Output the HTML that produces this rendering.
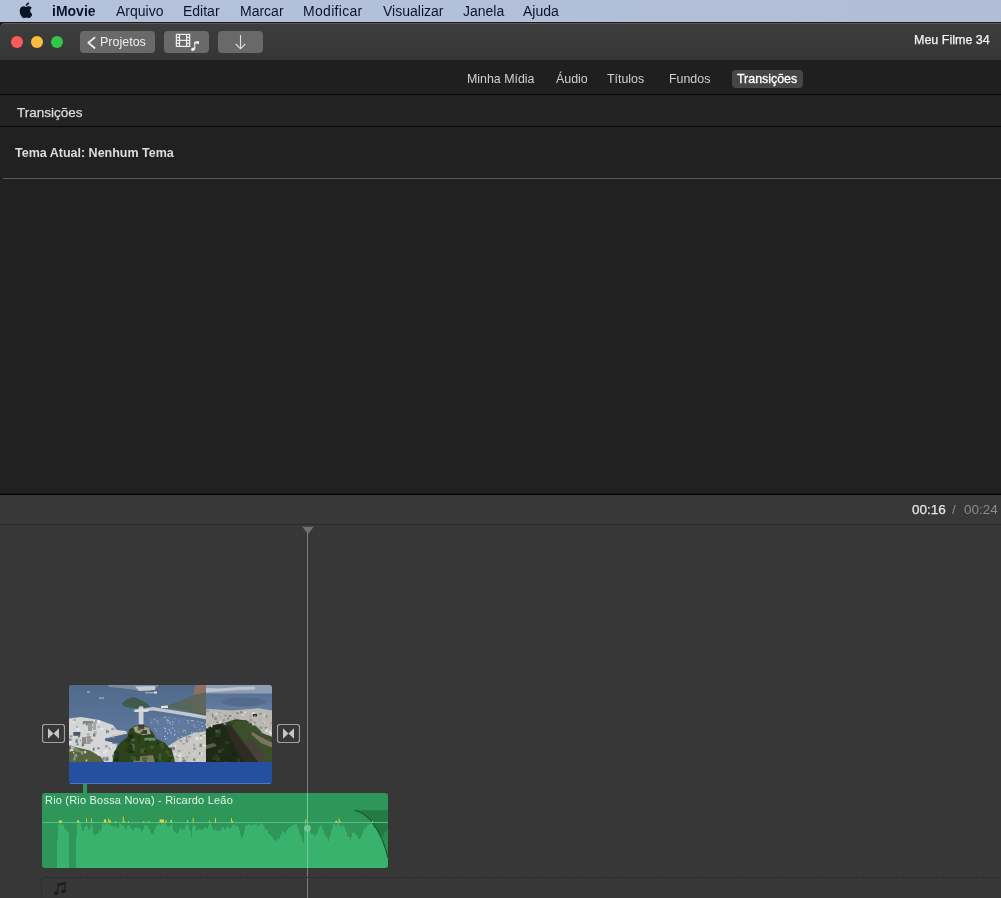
<!DOCTYPE html>
<html>
<head>
<meta charset="utf-8">
<style>
*{box-sizing:border-box;margin:0;padding:0}
html,body{width:1001px;height:898px;overflow:hidden;background:#373737;font-family:"Liberation Sans",sans-serif;}
body{position:relative}
.abs{position:absolute}
.t{position:absolute;white-space:nowrap;line-height:1;transform-origin:0 0;will-change:transform}
#menubar{left:0;top:0;width:1001px;height:22px;background:linear-gradient(90deg,#b5c2dc,#b0bdd5)}
#menuline{left:0;top:22px;width:1001px;height:1px;background:#1a1a1c}
#titlebar{left:0;top:23px;width:1001px;height:37px;background:linear-gradient(#3d3d3d,#363636);border-top:1px solid #5c5c5c;border-top-left-radius:5px}
#tbback{left:0;top:22px;width:20px;height:10px;background:#1a1a1c}
#tbbot{left:0;top:60px;width:1001px;height:1px;background:#0b0b0b}
#tabbar{left:0;top:60px;width:1001px;height:34px;background:#1f1f1f}
#tabline{left:0;top:94px;width:1001px;height:1px;background:#070707}
#hdr{left:0;top:95px;width:1001px;height:31px;background:#232323}
#hdrline{left:0;top:126px;width:1001px;height:1px;background:#070707}
#content{left:0;top:127px;width:1001px;height:367px;background:#212121}
#sep{left:3px;top:178px;width:998px;height:1px;background:#595959}
#contentline{left:0;top:493px;width:1001px;height:2px;background:linear-gradient(#1a1a1a 50%,#000 50%)}
#tltool{left:0;top:495px;width:1001px;height:29px;background:#383838}
#tlline{left:0;top:524px;width:1001px;height:1px;background:#2b2b2b}
#tl{left:0;top:525px;width:1001px;height:373px;background:#373737}
.menu{color:#0a1428;font-size:14px;top:4px}
.btn{position:absolute;top:31px;height:22px;background:#696969;border-radius:4px}
.tab{color:#d0d0d0;font-size:12.400px;top:73px}
.light{position:absolute;top:36px;width:12px;height:12px;border-radius:50%}
</style>
</head>
<body>
<div class="abs" id="menubar"></div>
<div class="abs" id="menuline"></div>
<div class="abs" id="tbback"></div>
<div class="abs" id="titlebar"></div>
<div class="abs" id="tbbot"></div>
<div class="abs" id="tabbar"></div>
<div class="abs" id="tabline"></div>
<div class="abs" id="hdr"></div>
<div class="abs" id="hdrline"></div>
<div class="abs" id="content"></div>
<div class="abs" id="sep"></div>
<div class="abs" id="contentline"></div>
<div class="abs" id="tltool"></div>
<div class="abs" id="tlline"></div>
<div class="abs" id="tl"></div>

<!-- menu bar -->
<svg class="abs" id="apple" style="left:18.500px;top:1.500px" width="13.500" height="16.400" viewBox="0 0 14 17"><path fill="#0a1428" d="M11.6 9c0-2 1.6-2.900 1.700-3-0.900-1.400-2.400-1.600-2.900-1.600-1.200-0.100-2.400 0.700-3 0.700-0.600 0-1.600-0.700-2.600-0.700C3.400 4.400 2.100 5.200 1.400 6.400 0 8.900 1 12.600 2.400 14.600c0.700 1 1.500 2.100 2.600 2.100 1 0 1.400-0.700 2.700-0.700 1.200 0 1.600 0.700 2.700 0.700 1.100 0 1.800-1 2.500-2 0.800-1.100 1.100-2.200 1.100-2.300C13.900 12.300 11.600 11.500 11.600 9zM9.500 2.900c0.600-0.700 0.900-1.600 0.800-2.600C9.500 0.400 8.500 0.900 7.900 1.600 7.400 2.200 6.900 3.200 7.100 4.100 8 4.200 8.900 3.700 9.500 2.900z"/></svg>
<div class="t menu" id="m0" style="left:52px;font-weight:bold">iMovie</div>
<div class="t menu" id="m1" style="left:116px">Arquivo</div>
<div class="t menu" id="m2" style="left:183px">Editar</div>
<div class="t menu" id="m3" style="left:240px">Marcar</div>
<div class="t menu" id="m4" style="left:303px;letter-spacing:0.3px">Modificar</div>
<div class="t menu" id="m5" style="left:383px">Visualizar</div>
<div class="t menu" id="m6" style="left:463px">Janela</div>
<div class="t menu" id="m7" style="left:523px">Ajuda</div>

<!-- title bar -->
<div class="light" style="left:11px;background:#fc5b57"></div>
<div class="light" style="left:31px;background:#fdbc40"></div>
<div class="light" style="left:51px;background:#33c748"></div>
<div class="btn" style="left:80px;width:75px"></div>
<div class="btn" style="left:164px;width:45px"></div>
<div class="btn" style="left:218px;width:45px"></div>
<svg class="abs" style="left:86px;top:36px" width="11" height="14" viewBox="0 0 11 14"><path d="M8.600 1.600 L2.400 6.800 L8.600 12" fill="none" stroke="#ececec" stroke-width="1.800" stroke-linecap="round" stroke-linejoin="round"/></svg>
<svg class="abs" style="left:175px;top:33px" width="26" height="19" viewBox="0 0 26 19"><g fill="none" stroke="#ededed" stroke-width="1.250"><rect x="1.400" y="1.400" width="13.300" height="12"/><path d="M4.500 1.400 V13.400 M11.600 1.400 V13.400 M4.500 7.400 H11.600 M1.400 4.400 H4.500 M1.400 7.400 H4.500 M1.400 10.400 H4.500 M11.600 4.400 H14.700 M11.600 7.400 H14.700 M11.600 10.400 H14.700"/></g><g fill="#f2f2f2"><ellipse cx="18" cy="16.200" rx="2" ry="1.600" transform="rotate(-20 18 16.200)"/><path d="M19.200 16.200 V8.700 L24 8 V11.600 C23 10.400 21.500 10.300 20.300 10.800 V16.200 Z"/></g></svg>
<svg class="abs" style="left:234px;top:34px" width="13" height="16" viewBox="0 0 13 16"><path d="M6.500 1 V14.600 M1.800 10 L6.500 14.800 L11.200 10" fill="none" stroke="#e2e2e2" stroke-width="1.100"/></svg>
<div class="t" id="proj" style="left:100px;top:36px;font-size:12.500px;color:#f0f0f0">Projetos</div>
<div class="t" id="title" style="left:914px;top:33.500px;font-size:12.500px;color:#f2f2f2;-webkit-text-stroke:0.25px #f2f2f2">Meu Filme 34</div>

<!-- tabs -->
<div class="abs" style="left:732px;top:70px;width:71px;height:18px;background:#464646;border-radius:4px"></div>
<div class="t tab" id="t0" style="left:467px">Minha Mídia</div>
<div class="t tab" id="t1" style="left:556px">Áudio</div>
<div class="t tab" id="t2" style="left:607px">Títulos</div>
<div class="t tab" id="t3" style="left:669px">Fundos</div>
<div class="t tab" id="t4" style="left:737px;color:#fff;-webkit-text-stroke:0.3px #fff">Transições</div>

<div class="t" id="h1" style="left:17px;top:106px;font-size:13.500px;color:#dcdcdc;-webkit-text-stroke:0.25px #dcdcdc">Transições</div>
<div class="t" id="h2" style="left:15px;top:146.500px;font-size:12.500px;font-weight:bold;color:#dcdcdc">Tema Atual: Nenhum Tema</div>

<div class="t" id="tc1" style="left:912px;top:502.500px;font-size:13.500px;color:#e6e6e6;-webkit-text-stroke:0.25px #e6e6e6">00:16</div>
<div class="t" id="tc2" style="left:952px;top:502.500px;font-size:13.500px;color:#8a8a8a">/</div>
<div class="t" id="tc3" style="left:963.500px;top:502.500px;font-size:13.500px;color:#8a8a8a">00:24</div>

<!-- timeline -->
<div class="abs" style="left:307px;top:533px;width:1px;height:365px;background:#7c7c7c"></div>
<svg class="abs" style="left:301.500px;top:526px" width="12" height="9" viewBox="0 0 12 9"><path d="M0.3 0.8 L11.700 0.8 L6 8.200 Z" fill="#6f6f6f"/></svg>

<!-- transition icons -->
<svg class="abs" style="left:42px;top:724px" width="23" height="19" viewBox="0 0 23 19"><rect x="0.5" y="0.5" width="22" height="18" rx="2.400" fill="none" stroke="#a2a2a2" stroke-width="1.200"/><path d="M6 4.300 L11.500 9.500 L6 14.700 Z M17 4.300 L11.500 9.500 L17 14.700 Z" fill="#c6c6c6"/></svg>
<svg class="abs" style="left:277px;top:724px" width="23" height="19" viewBox="0 0 23 19"><rect x="0.5" y="0.5" width="22" height="18" rx="2.400" fill="none" stroke="#a2a2a2" stroke-width="1.200"/><path d="M6 4.300 L11.500 9.500 L6 14.700 Z M17 4.300 L11.500 9.500 L17 14.700 Z" fill="#c6c6c6"/></svg>

<!-- video clip -->
<div class="abs" id="clip" style="left:69px;top:685px;width:203px;height:99px;border-radius:3px;overflow:hidden;background:#254f9f">
<svg class="abs" style="left:0;top:0" width="203" height="77" viewBox="0 0 203 77">
<defs><filter id="bl" x="-5%" y="-5%" width="110%" height="110%"><feGaussianBlur stdDeviation="0.85"/></filter>
<linearGradient id="sea" x1="0" y1="0" x2="0" y2="1"><stop offset="0" stop-color="#50698b"/><stop offset="0.7" stop-color="#5d799d"/></linearGradient>
<linearGradient id="sea2" x1="0" y1="0" x2="0" y2="1"><stop offset="0.1" stop-color="#566f92"/><stop offset="0.32" stop-color="#627da2"/></linearGradient>
<clipPath id="cL"><rect x="0" y="0" width="137" height="77"/></clipPath>
<clipPath id="cR"><rect x="137" y="0" width="66" height="77"/></clipPath>
</defs>
<g clip-path="url(#cL)"><g>
<rect x="-3" y="-3" width="143" height="83" fill="url(#sea)"/><polygon points="38.0,-1.0 90.0,-1.0 88.0,3.0 80.0,6.0 66.0,5.0 52.0,3.0 40.0,2.0" fill="#7c8ba2" /><polygon points="66.0,1.5 86.0,1.0 86.0,5.0 70.0,6.0" fill="#c5cad2" /><rect x="18" y="6.500" width="3" height="1.200" fill="#a9b6c8"/><rect x="30" y="12.500" width="5" height="1.200" fill="#a9b6c8"/><rect x="76" y="7" width="12" height="1.500" fill="#93a2b8"/><rect x="85" y="6.500" width="3" height="2" fill="#d8dde4"/><polygon points="53.0,18.5 57.0,14.5 64.5,12.0 70.0,14.0 78.0,18.5 81.0,21.5 74.0,23.0 62.0,23.0 55.0,21.5" fill="#3f5b4c" /><polygon points="124.0,10.0 126.0,2.0 128.0,-1.0 138.0,-1.0 138.0,8.0" fill="#8d7064" /><polygon points="90.0,22.7 100.0,20.0 111.0,16.0 124.0,10.5 138.0,7.0 138.0,32.0 121.0,27.2 105.0,23.5" fill="#55675a" /><polygon points="118.0,14.0 138.0,8.0 138.0,30.0 128.0,28.0 122.0,20.0" fill="#5d6658" /><polygon points="64.0,25.8 76.0,23.5 84.0,22.0 96.0,24.0 118.4,27.5 138.0,31.0 138.0,34.5 118.4,31.0 96.0,27.2 84.0,25.5 66.0,27.0" fill="#c3c8cf" /><polygon points="92.0,21.0 99.0,20.5 99.0,23.0 92.0,23.0" fill="#e2e4e6" /><polygon points="80.0,33.0 100.0,31.0 120.0,34.0 138.0,38.0 138.0,58.0 120.0,58.0 100.0,60.0 90.0,52.0 82.0,44.0" fill="#607a9f" /><polygon points="-1.0,33.5 12.0,32.0 30.0,35.0 44.0,40.0 48.0,45.0 57.0,46.0 58.0,49.0 44.0,52.0 36.0,53.5 36.0,55.5 48.0,58.0 46.0,77.0 -1.0,77.0" fill="#d4d5d6" /><polygon points="36.0,53.5 46.0,51.0 58.0,48.5 60.0,52.0 52.0,57.5 47.0,58.5 36.0,55.5" fill="#4d668a" /><polygon points="36.0,52.2 58.0,47.2 58.0,48.5 36.0,53.5" fill="#d9c9b4" /><polygon points="-1.0,60.0 6.0,62.0 21.0,65.4 31.5,71.4 36.0,78.0 -1.0,78.0" fill="#53643f" /><polygon points="-1.0,60.0 8.0,63.0 14.0,68.0 4.0,66.0" fill="#7a8a68" /><polygon points="99.0,61.0 111.0,53.4 126.0,47.5 138.0,46.0 138.0,78.0 106.4,78.0 102.0,67.0" fill="#c9c7c4" /><polygon points="72.0,40.0 78.0,41.5 84.0,47.5 87.0,53.4 96.0,58.0 103.4,67.0 106.4,78.0 43.4,78.0 45.0,67.0 51.0,58.0 58.4,52.0 60.0,44.5 66.0,40.7" fill="#2d431c" /><polygon points="64.4,42.0 72.0,40.5 80.0,43.0 82.0,49.0 74.0,50.0 66.0,47.0" fill="#a89f88" /><polygon points="75.0,53.0 86.0,52.5 87.0,55.5 76.0,56.0" fill="#5d8a6a" /><polygon points="63.0,54.0 65.5,54.0 65.5,66.0 63.0,66.0" fill="#5c6650" /><polygon points="66.0,72.0 84.0,70.0 86.0,78.0 64.0,78.0" fill="#7c7a60" />
</g><g opacity="0.8"><rect x="98.8" y="35.4" width="1.1" height="0.7" fill="#e8edf3"/><rect x="132.8" y="37.2" width="0.7" height="0.9" fill="#cfd8e6"/><rect x="85.3" y="43.3" width="1.2" height="0.7" fill="#cfd8e6"/><rect x="116.6" y="47.9" width="0.6" height="1.0" fill="#cfd8e6"/><rect x="129.8" y="39.4" width="0.7" height="0.7" fill="#b4c2d6"/><rect x="112.5" y="50.8" width="0.7" height="1.0" fill="#cfd8e6"/><rect x="101.6" y="46.9" width="0.6" height="0.6" fill="#cfd8e6"/><rect x="108.8" y="46.4" width="1.1" height="0.9" fill="#b4c2d6"/><rect x="101.0" y="38.2" width="0.7" height="1.1" fill="#cfd8e6"/><rect x="113.3" y="46.2" width="1.2" height="1.1" fill="#b4c2d6"/><rect x="109.7" y="35.8" width="0.8" height="1.3" fill="#b4c2d6"/><rect x="124.3" y="47.6" width="1.2" height="0.8" fill="#e8edf3"/><rect x="100.3" y="45.4" width="1.2" height="0.6" fill="#cfd8e6"/><rect x="134.8" y="44.7" width="1.1" height="0.6" fill="#e8edf3"/><rect x="98.0" y="47.8" width="1.1" height="0.9" fill="#e8edf3"/><rect x="102.4" y="50.4" width="0.6" height="0.9" fill="#cfd8e6"/><rect x="115.4" y="45.3" width="0.8" height="0.8" fill="#e8edf3"/><rect x="94.4" y="42.3" width="1.2" height="0.7" fill="#b4c2d6"/><rect x="103.3" y="39.1" width="0.7" height="0.9" fill="#e8edf3"/><rect x="96.1" y="43.0" width="0.9" height="1.2" fill="#cfd8e6"/><rect x="88.8" y="36.1" width="0.8" height="0.8" fill="#b4c2d6"/><rect x="128.2" y="36.3" width="0.8" height="0.7" fill="#e8edf3"/><rect x="101.4" y="47.4" width="1.3" height="1.1" fill="#e8edf3"/><rect x="135.1" y="50.0" width="1.1" height="0.9" fill="#e8edf3"/><rect x="126.3" y="42.4" width="0.9" height="0.7" fill="#e8edf3"/><rect x="103.2" y="36.5" width="1.3" height="0.9" fill="#cfd8e6"/><rect x="99.7" y="32.5" width="0.6" height="0.7" fill="#cfd8e6"/><rect x="135.0" y="48.8" width="0.6" height="0.7" fill="#b4c2d6"/><rect x="88.6" y="38.3" width="0.8" height="0.9" fill="#cfd8e6"/><rect x="86.7" y="45.2" width="1.3" height="0.9" fill="#b4c2d6"/><rect x="85.0" y="34.0" width="0.8" height="0.8" fill="#e8edf3"/><rect x="135.2" y="46.3" width="0.7" height="1.0" fill="#cfd8e6"/><rect x="124.0" y="39.6" width="1.1" height="0.7" fill="#b4c2d6"/><rect x="110.1" y="57.3" width="0.8" height="0.8" fill="#e8edf3"/><rect x="125.2" y="40.6" width="0.8" height="1.2" fill="#cfd8e6"/><rect x="126.8" y="54.7" width="1.1" height="0.8" fill="#e8edf3"/><rect x="108.6" y="52.2" width="1.3" height="1.2" fill="#b4c2d6"/><rect x="95.0" y="51.1" width="1.3" height="0.9" fill="#e8edf3"/><rect x="101.1" y="37.4" width="0.8" height="0.7" fill="#cfd8e6"/><rect x="132.7" y="41.0" width="1.1" height="1.2" fill="#cfd8e6"/><rect x="132.8" y="53.7" width="1.1" height="0.9" fill="#cfd8e6"/><rect x="105.2" y="49.4" width="0.7" height="1.3" fill="#e8edf3"/><rect x="103.0" y="42.6" width="1.3" height="1.1" fill="#cfd8e6"/><rect x="114.3" y="44.5" width="1.1" height="1.0" fill="#e8edf3"/><rect x="136.9" y="50.1" width="0.8" height="1.0" fill="#cfd8e6"/><rect x="123.5" y="35.0" width="1.3" height="0.7" fill="#cfd8e6"/><rect x="81.6" y="37.2" width="1.0" height="1.1" fill="#b4c2d6"/><rect x="95.0" y="43.2" width="0.7" height="1.2" fill="#b4c2d6"/><rect x="132.1" y="50.2" width="1.2" height="1.0" fill="#e8edf3"/><rect x="87.6" y="35.4" width="1.0" height="1.2" fill="#cfd8e6"/><rect x="115.3" y="53.5" width="0.7" height="0.7" fill="#e8edf3"/><rect x="122.1" y="47.1" width="0.8" height="1.0" fill="#e8edf3"/><rect x="108.0" y="53.5" width="1.2" height="0.6" fill="#cfd8e6"/><rect x="96.1" y="53.4" width="1.0" height="1.0" fill="#cfd8e6"/><rect x="105.7" y="48.8" width="1.0" height="1.0" fill="#e8edf3"/><rect x="96.1" y="45.7" width="1.2" height="1.0" fill="#cfd8e6"/><rect x="120.6" y="56.4" width="1.3" height="0.8" fill="#e8edf3"/><rect x="131.8" y="36.9" width="0.9" height="0.9" fill="#b4c2d6"/><rect x="105.6" y="33.1" width="0.8" height="0.7" fill="#e8edf3"/><rect x="97.6" y="34.5" width="1.1" height="1.3" fill="#e8edf3"/><rect x="118.3" y="35.1" width="1.2" height="1.3" fill="#cfd8e6"/><rect x="118.7" y="37.5" width="1.1" height="1.3" fill="#b4c2d6"/><rect x="99.7" y="36.7" width="0.8" height="1.1" fill="#cfd8e6"/><rect x="99.6" y="44.3" width="1.1" height="0.9" fill="#e8edf3"/><rect x="116.2" y="45.9" width="0.6" height="1.3" fill="#cfd8e6"/><rect x="95.4" y="32.1" width="1.1" height="0.8" fill="#cfd8e6"/><rect x="127.5" y="55.6" width="1.1" height="1.3" fill="#b4c2d6"/><rect x="113.1" y="51.3" width="0.7" height="0.6" fill="#e8edf3"/><rect x="95.6" y="31.5" width="0.7" height="0.8" fill="#e8edf3"/><rect x="130.0" y="44.2" width="0.8" height="1.0" fill="#b4c2d6"/><rect x="136.2" y="38.6" width="0.7" height="1.3" fill="#e8edf3"/><rect x="97.7" y="53.0" width="0.8" height="1.0" fill="#cfd8e6"/><rect x="95.7" y="54.3" width="1.3" height="0.6" fill="#cfd8e6"/><rect x="122.5" y="47.0" width="0.7" height="0.9" fill="#b4c2d6"/><rect x="105.1" y="45.4" width="1.2" height="0.9" fill="#e8edf3"/><rect x="97.9" y="37.2" width="0.8" height="0.7" fill="#e8edf3"/><rect x="122.3" y="35.1" width="1.3" height="1.3" fill="#cfd8e6"/><rect x="131.0" y="43.5" width="0.6" height="1.1" fill="#b4c2d6"/><rect x="130.5" y="50.4" width="0.8" height="0.8" fill="#b4c2d6"/><rect x="82.6" y="36.4" width="0.8" height="0.6" fill="#b4c2d6"/><rect x="31.3" y="43.0" width="3.4" height="1.9" fill="#e8e8e8"/><rect x="9.8" y="47.1" width="1.4" height="1.8" fill="#5b6068"/><rect x="10.9" y="54.7" width="1.2" height="1.8" fill="#8b8f96"/><rect x="7.5" y="58.4" width="2.1" height="1.9" fill="#5b6068"/><rect x="12.7" y="58.4" width="2.4" height="2.9" fill="#5b6068"/><rect x="34.2" y="66.4" width="2.9" height="2.3" fill="#e8e8e8"/><rect x="41.7" y="60.9" width="1.3" height="3.1" fill="#f0f0f0"/><rect x="36.0" y="65.0" width="3.1" height="1.5" fill="#f0f0f0"/><rect x="43.4" y="57.6" width="3.1" height="1.2" fill="#5b6068"/><rect x="33.5" y="72.2" width="2.8" height="2.8" fill="#6f747c"/><rect x="4.0" y="33.9" width="2.7" height="3.4" fill="#a4a6a8"/><rect x="36.0" y="60.2" width="2.8" height="2.3" fill="#8b8f96"/><rect x="26.0" y="35.2" width="3.3" height="3.3" fill="#8b8f96"/><rect x="42.5" y="43.3" width="1.4" height="1.8" fill="#5b6068"/><rect x="43.6" y="42.4" width="2.7" height="2.3" fill="#a4a6a8"/><rect x="3.5" y="73.0" width="1.9" height="1.3" fill="#5b6068"/><rect x="7.7" y="43.4" width="2.9" height="1.9" fill="#f0f0f0"/><rect x="6.9" y="53.7" width="2.3" height="3.4" fill="#8b8f96"/><rect x="39.8" y="62.4" width="1.9" height="2.4" fill="#a4a6a8"/><rect x="26.5" y="66.5" width="3.5" height="2.5" fill="#e8e8e8"/><rect x="0.0" y="52.7" width="3.1" height="3.4" fill="#a4a6a8"/><rect x="3.4" y="36.1" width="2.9" height="1.8" fill="#e8e8e8"/><rect x="6.8" y="68.9" width="2.4" height="3.2" fill="#5b6068"/><rect x="20.5" y="54.4" width="3.2" height="2.1" fill="#6f747c"/><rect x="-0.8" y="54.1" width="2.2" height="1.9" fill="#6f747c"/><rect x="23.6" y="48.9" width="1.5" height="2.0" fill="#e8e8e8"/><rect x="43.3" y="69.8" width="1.5" height="3.3" fill="#5b6068"/><rect x="-0.3" y="65.3" width="1.8" height="1.3" fill="#a4a6a8"/><rect x="20.3" y="51.3" width="1.8" height="1.3" fill="#8b8f96"/><rect x="2.0" y="61.8" width="2.7" height="1.5" fill="#e8e8e8"/><rect x="24.7" y="46.2" width="3.0" height="3.0" fill="#a4a6a8"/><rect x="36.2" y="73.1" width="3.4" height="2.5" fill="#5b6068"/><rect x="3.8" y="74.0" width="2.1" height="2.6" fill="#6f747c"/><rect x="37.0" y="44.9" width="1.3" height="3.3" fill="#6f747c"/><rect x="9.1" y="50.7" width="1.8" height="1.8" fill="#5b6068"/><rect x="37.7" y="45.5" width="2.5" height="2.1" fill="#6f747c"/><rect x="28.5" y="68.5" width="2.5" height="2.2" fill="#e8e8e8"/><rect x="7.2" y="40.7" width="1.4" height="2.0" fill="#8b8f96"/><rect x="17.8" y="48.6" width="3.1" height="1.7" fill="#8b8f96"/><rect x="43.2" y="50.6" width="2.2" height="2.4" fill="#a4a6a8"/><rect x="14.9" y="65.8" width="2.3" height="2.5" fill="#e8e8e8"/><rect x="6.4" y="54.7" width="2.6" height="3.2" fill="#6f747c"/><rect x="4.5" y="72.4" width="2.1" height="2.7" fill="#a4a6a8"/><rect x="0.9" y="63.9" width="3.3" height="2.3" fill="#f0f0f0"/><rect x="27.9" y="35.3" width="3.3" height="3.3" fill="#f0f0f0"/><rect x="13.7" y="36.9" width="1.6" height="2.4" fill="#5b6068"/><rect x="5.4" y="69.1" width="2.8" height="3.1" fill="#a4a6a8"/><rect x="4.0" y="67.0" width="1.2" height="1.5" fill="#f0f0f0"/><rect x="16.9" y="37.8" width="1.8" height="2.7" fill="#5b6068"/><rect x="16.7" y="74.5" width="1.6" height="1.8" fill="#f0f0f0"/><rect x="-0.9" y="56.2" width="3.5" height="1.8" fill="#e8e8e8"/><rect x="37.0" y="71.8" width="2.3" height="1.7" fill="#6f747c"/><rect x="0.7" y="50.5" width="2.7" height="1.3" fill="#6f747c"/><rect x="28.4" y="62.4" width="2.2" height="1.8" fill="#5b6068"/><rect x="24.0" y="48.7" width="2.3" height="2.8" fill="#5b6068"/><rect x="23.8" y="62.7" width="1.7" height="3.0" fill="#5b6068"/><rect x="28.2" y="41.0" width="3.0" height="1.6" fill="#a4a6a8"/><rect x="12.1" y="66.2" width="1.9" height="3.4" fill="#a4a6a8"/><rect x="35.0" y="72.3" width="2.3" height="3.3" fill="#8b8f96"/><rect x="22.2" y="41.6" width="3.4" height="1.5" fill="#8b8f96"/><rect x="126.7" y="51.9" width="2.1" height="2.6" fill="#ececec"/><rect x="127.6" y="77.9" width="3.1" height="1.9" fill="#6f7074"/><rect x="124.4" y="62.8" width="2.1" height="1.8" fill="#77786f"/><rect x="113.8" y="58.0" width="1.9" height="1.5" fill="#8d8d90"/><rect x="115.4" y="74.3" width="2.3" height="2.7" fill="#a8a8a8"/><rect x="112.9" y="72.3" width="2.8" height="2.1" fill="#8d8d90"/><rect x="126.5" y="52.3" width="2.3" height="2.1" fill="#ececec"/><rect x="113.2" y="74.7" width="1.3" height="2.0" fill="#77786f"/><rect x="128.9" y="47.3" width="1.3" height="1.3" fill="#8d8d90"/><rect x="109.0" y="69.9" width="3.0" height="1.9" fill="#ececec"/><rect x="112.1" y="76.5" width="1.3" height="2.7" fill="#77786f"/><rect x="111.3" y="54.8" width="1.2" height="2.7" fill="#77786f"/><rect x="135.9" y="48.1" width="2.9" height="1.4" fill="#77786f"/><rect x="136.3" y="76.5" width="2.0" height="1.7" fill="#a8a8a8"/><rect x="130.8" y="50.2" width="2.2" height="1.2" fill="#77786f"/><rect x="110.8" y="68.1" width="1.5" height="1.7" fill="#ececec"/><rect x="117.0" y="71.1" width="2.4" height="2.2" fill="#a8a8a8"/><rect x="128.4" y="53.9" width="1.3" height="1.3" fill="#f4f4f4"/><rect x="120.2" y="51.1" width="2.1" height="1.4" fill="#8d8d90"/><rect x="102.8" y="62.0" width="2.6" height="2.1" fill="#6f7074"/><rect x="104.2" y="60.7" width="3.0" height="1.7" fill="#f4f4f4"/><rect x="132.0" y="67.3" width="1.4" height="2.9" fill="#ececec"/><rect x="109.9" y="54.6" width="1.7" height="1.7" fill="#a8a8a8"/><rect x="105.0" y="74.3" width="2.4" height="1.9" fill="#a8a8a8"/><rect x="119.5" y="66.8" width="1.4" height="2.1" fill="#8d8d90"/><rect x="103.0" y="61.2" width="2.8" height="2.9" fill="#ececec"/><rect x="136.9" y="64.7" width="3.1" height="1.9" fill="#6f7074"/><rect x="116.5" y="54.3" width="2.8" height="3.1" fill="#8d8d90"/><rect x="123.9" y="68.7" width="1.9" height="1.3" fill="#ececec"/><rect x="108.9" y="65.2" width="2.5" height="1.6" fill="#8d8d90"/><rect x="130.9" y="59.1" width="1.9" height="2.4" fill="#8d8d90"/><rect x="106.9" y="71.4" width="2.3" height="1.3" fill="#8d8d90"/><rect x="130.0" y="67.2" width="1.5" height="2.3" fill="#77786f"/><rect x="105.4" y="68.3" width="2.0" height="1.8" fill="#ececec"/><rect x="128.1" y="74.3" width="2.0" height="1.2" fill="#ececec"/><rect x="124.1" y="58.5" width="2.0" height="3.1" fill="#a8a8a8"/><rect x="134.2" y="59.6" width="2.8" height="2.0" fill="#ececec"/><rect x="117.0" y="51.2" width="1.2" height="2.3" fill="#77786f"/><rect x="130.5" y="58.7" width="2.3" height="3.1" fill="#77786f"/><rect x="118.7" y="50.7" width="1.8" height="2.2" fill="#8d8d90"/><rect x="103.2" y="61.7" width="2.8" height="3.1" fill="#6f7074"/><rect x="110.8" y="72.8" width="1.3" height="3.0" fill="#ececec"/><rect x="114.1" y="74.9" width="2.4" height="2.8" fill="#6f7074"/><rect x="124.0" y="73.4" width="2.4" height="2.4" fill="#6f7074"/><rect x="131.3" y="51.9" width="1.6" height="2.0" fill="#f4f4f4"/><rect x="52.8" y="76.9" width="4.4" height="2.6" fill="#263a19"/><rect x="96.5" y="65.5" width="4.0" height="3.0" fill="#48632e"/><rect x="81.2" y="60.9" width="3.9" height="2.9" fill="#48632e"/><rect x="62.8" y="49.5" width="3.2" height="3.1" fill="#263a19"/><rect x="71.0" y="40.9" width="3.9" height="3.5" fill="#3d5927"/><rect x="71.5" y="63.5" width="4.5" height="4.5" fill="#48632e"/><rect x="68.6" y="42.6" width="3.1" height="3.1" fill="#48632e"/><rect x="75.2" y="65.0" width="2.1" height="2.4" fill="#1a2b12"/><rect x="92.4" y="59.4" width="2.2" height="3.5" fill="#48632e"/><rect x="84.5" y="69.8" width="2.1" height="2.2" fill="#263a19"/><rect x="89.5" y="71.0" width="2.6" height="4.9" fill="#48632e"/><rect x="61.5" y="70.8" width="4.4" height="4.1" fill="#3d5927"/><rect x="75.0" y="75.0" width="2.6" height="2.8" fill="#263a19"/><rect x="58.4" y="54.1" width="2.6" height="3.2" fill="#1a2b12"/><rect x="86.2" y="74.0" width="2.5" height="4.4" fill="#1e3117"/><rect x="97.5" y="76.7" width="3.4" height="3.6" fill="#1e3117"/><rect x="59.3" y="60.4" width="4.6" height="4.2" fill="#1a2b12"/><rect x="60.1" y="77.6" width="3.7" height="3.1" fill="#1e3117"/><rect x="71.3" y="46.7" width="4.2" height="2.1" fill="#263a19"/><rect x="59.4" y="64.3" width="5.0" height="3.8" fill="#1a2b12"/><rect x="89.6" y="68.4" width="2.7" height="2.9" fill="#48632e"/><rect x="69.7" y="53.8" width="2.1" height="3.5" fill="#263a19"/><rect x="57.5" y="62.2" width="3.8" height="2.6" fill="#263a19"/><rect x="88.0" y="57.1" width="2.2" height="2.4" fill="#1a2b12"/><rect x="68.7" y="50.0" width="2.0" height="3.9" fill="#263a19"/><rect x="99.6" y="62.6" width="3.7" height="3.8" fill="#263a19"/><rect x="76.9" y="55.4" width="2.7" height="2.2" fill="#1e3117"/><rect x="56.0" y="63.1" width="3.5" height="3.9" fill="#263a19"/><rect x="99.4" y="69.8" width="4.1" height="2.0" fill="#48632e"/><rect x="90.3" y="57.7" width="4.2" height="3.4" fill="#3d5927"/><rect x="99.6" y="75.2" width="4.8" height="2.8" fill="#1e3117"/><rect x="60.2" y="61.0" width="3.3" height="4.4" fill="#263a19"/><rect x="101.9" y="74.0" width="2.3" height="3.5" fill="#3d5927"/><rect x="59.8" y="49.0" width="4.2" height="4.8" fill="#1a2b12"/><rect x="55.5" y="54.8" width="3.8" height="3.1" fill="#263a19"/><rect x="73.0" y="71.9" width="4.1" height="4.6" fill="#48632e"/><rect x="99.1" y="70.0" width="3.2" height="3.8" fill="#263a19"/><rect x="46.0" y="66.3" width="3.9" height="4.1" fill="#1e3117"/><rect x="66.3" y="71.1" width="4.5" height="4.7" fill="#1e3117"/><rect x="98.8" y="68.7" width="4.1" height="3.2" fill="#3d5927"/><rect x="45.6" y="72.2" width="4.4" height="3.9" fill="#1a2b12"/><rect x="73.5" y="45.0" width="4.4" height="3.9" fill="#1a2b12"/><rect x="63.5" y="56.1" width="2.1" height="2.8" fill="#1a2b12"/><rect x="46.4" y="68.9" width="4.7" height="4.3" fill="#263a19"/><rect x="75.1" y="72.4" width="3.9" height="2.1" fill="#48632e"/><rect x="69.700" y="21.200" width="4.800" height="19" rx="1.500" fill="#ebebe6"/><rect x="65.500" y="24.300" width="14" height="2.800" rx="1" fill="#e4e4e0"/><rect x="69.200" y="39.500" width="6" height="4.200" fill="#2d2926"/><rect x="4.300" y="47" width="7" height="3.800" fill="#2a3850"/><rect x="13" y="52" width="4" height="7" fill="#7b7674"/><rect x="17.500" y="51" width="4" height="8" fill="#8d8886"/><rect x="19" y="38" width="4" height="8" fill="#8a8c8c"/><rect x="24" y="37" width="3" height="8" fill="#9a9c9c"/><rect x="14" y="36" width="10" height="2.500" fill="#6f7468"/></g></g>
<g clip-path="url(#cR)"><g>
<rect x="134" y="-3" width="72" height="83" fill="url(#sea2)"/><rect x="134" y="-3" width="72" height="11.500" fill="#8e9db4"/><polygon points="137.0,3.0 150.0,3.5 170.0,2.0 186.0,1.5 186.0,4.5 170.0,5.0 150.0,6.5 137.0,7.5" fill="#bcc3ce" /><polygon points="186.0,1.0 204.0,2.0 204.0,6.0 186.0,5.0" fill="#8f9fb6" /><ellipse cx="175" cy="17" rx="22" ry="4.500" fill="#536a8c"/><polygon points="136.0,23.8 162.7,25.6 189.7,23.2 204.0,25.6 204.0,52.5 194.6,48.9 187.2,41.5 177.4,35.4 166.4,34.2 155.4,37.9 144.4,40.3 136.0,44.0" fill="#bcb9b4" /><rect x="184" y="29" width="4" height="2.500" fill="#20242c"/><polygon points="136.0,44.0 144.4,40.3 155.4,37.9 166.4,34.2 177.4,35.4 187.2,41.5 194.6,48.9 204.0,52.5 204.0,78.0 136.0,78.0" fill="#324326" /><polygon points="136.0,44.0 144.4,40.3 155.4,38.5 160.0,46.0 168.0,64.0 176.0,78.0 136.0,78.0" fill="#1e2a15" /><polygon points="156.6,38.5 161.5,40.3 175.0,58.7 189.7,77.5 175.0,77.5 166.4,63.6 159.0,48.9" fill="#2f2b22" /><polygon points="166.0,36.0 177.4,35.4 187.2,41.5 194.6,48.9 204.0,52.5 204.0,78.0 190.0,78.0 176.0,58.0 163.0,40.5" fill="#3c4e2a" /><polygon points="178.0,52.0 186.0,58.0 196.0,72.0 190.0,78.0 182.0,66.0 176.0,58.0" fill="#47403c" /><polygon points="182.3,46.5 190.0,51.0 204.0,58.0 204.0,63.0 192.0,58.0 183.0,50.0" fill="#7d745f" /><polygon points="146.0,45.0 151.0,44.5 151.5,48.0 147.0,48.5" fill="#456b54" /><polygon points="137.0,60.0 145.0,58.0 148.0,61.0 137.0,64.0" fill="#5c5d4a" />
</g><g opacity="0.8"><rect x="138.1" y="38.4" width="1.2" height="1.8" fill="#8f8f90"/><rect x="172.6" y="29.5" width="2.6" height="1.2" fill="#eeeeee"/><rect x="190.2" y="28.6" width="1.9" height="1.6" fill="#f6f6f6"/><rect x="155.3" y="29.5" width="2.3" height="1.9" fill="#8f8f90"/><rect x="199.8" y="45.7" width="1.9" height="2.8" fill="#f6f6f6"/><rect x="189.5" y="41.6" width="1.6" height="1.7" fill="#a9a9a8"/><rect x="196.6" y="45.0" width="1.8" height="2.2" fill="#eeeeee"/><rect x="150.0" y="30.9" width="2.6" height="1.9" fill="#a9a9a8"/><rect x="202.8" y="41.7" width="2.7" height="1.2" fill="#f6f6f6"/><rect x="179.9" y="33.4" width="1.6" height="1.3" fill="#a9a9a8"/><rect x="147.5" y="36.1" width="2.4" height="2.0" fill="#77777a"/><rect x="183.4" y="38.1" width="1.5" height="2.4" fill="#f6f6f6"/><rect x="146.5" y="27.8" width="1.4" height="1.6" fill="#f6f6f6"/><rect x="159.7" y="30.1" width="2.7" height="1.5" fill="#6a6c66"/><rect x="203.7" y="28.0" width="2.2" height="1.4" fill="#77777a"/><rect x="202.9" y="46.5" width="2.3" height="1.8" fill="#77777a"/><rect x="194.1" y="36.0" width="1.4" height="2.8" fill="#eeeeee"/><rect x="167.5" y="27.4" width="2.1" height="1.7" fill="#6a6c66"/><rect x="195.7" y="42.0" width="2.1" height="1.4" fill="#77777a"/><rect x="179.6" y="36.5" width="1.6" height="2.1" fill="#8f8f90"/><rect x="196.8" y="30.3" width="1.7" height="2.3" fill="#77777a"/><rect x="153.0" y="35.6" width="1.8" height="2.1" fill="#a9a9a8"/><rect x="143.2" y="30.6" width="1.4" height="2.3" fill="#77777a"/><rect x="171.3" y="26.2" width="2.0" height="2.0" fill="#6a6c66"/><rect x="189.9" y="34.0" width="1.6" height="2.3" fill="#a9a9a8"/><rect x="154.7" y="34.9" width="1.0" height="1.8" fill="#a9a9a8"/><rect x="175.5" y="26.4" width="1.5" height="1.7" fill="#f6f6f6"/><rect x="201.3" y="36.7" width="1.3" height="2.7" fill="#8f8f90"/><rect x="191.1" y="41.8" width="1.8" height="2.0" fill="#77777a"/><rect x="191.4" y="27.5" width="2.2" height="2.5" fill="#a9a9a8"/><rect x="167.8" y="31.8" width="2.0" height="1.2" fill="#a9a9a8"/><rect x="154.2" y="34.2" width="1.5" height="1.8" fill="#77777a"/><rect x="190.3" y="33.7" width="2.2" height="1.6" fill="#a9a9a8"/><rect x="180.8" y="33.8" width="2.7" height="2.5" fill="#8f8f90"/><rect x="141.8" y="39.7" width="1.6" height="2.7" fill="#f6f6f6"/><rect x="192.5" y="41.8" width="1.0" height="1.0" fill="#8f8f90"/><rect x="180.6" y="30.5" width="1.2" height="1.3" fill="#77777a"/><rect x="148.6" y="36.4" width="2.4" height="1.4" fill="#a9a9a8"/><rect x="189.8" y="28.1" width="2.6" height="2.1" fill="#8f8f90"/><rect x="173.7" y="30.9" width="1.4" height="1.3" fill="#a9a9a8"/><rect x="197.6" y="43.7" width="1.4" height="1.3" fill="#f6f6f6"/><rect x="193.2" y="36.9" width="2.0" height="2.2" fill="#a9a9a8"/><rect x="161.5" y="35.5" width="2.7" height="1.1" fill="#6a6c66"/><rect x="137.4" y="24.5" width="2.3" height="2.8" fill="#8f8f90"/><rect x="150.3" y="36.0" width="1.8" height="2.0" fill="#eeeeee"/><rect x="154.5" y="38.0" width="2.8" height="2.2" fill="#8f8f90"/><rect x="158.5" y="32.5" width="1.5" height="2.1" fill="#6a6c66"/><rect x="163.1" y="26.4" width="1.1" height="2.5" fill="#a9a9a8"/><rect x="142.9" y="28.5" width="1.1" height="2.4" fill="#6a6c66"/><rect x="145.4" y="32.3" width="2.3" height="2.6" fill="#77777a"/><rect x="164.7" y="32.5" width="1.8" height="2.2" fill="#8f8f90"/><rect x="192.1" y="45.9" width="1.8" height="2.3" fill="#a9a9a8"/><rect x="150.4" y="27.6" width="1.0" height="1.0" fill="#6a6c66"/><rect x="194.4" y="29.6" width="1.2" height="1.9" fill="#eeeeee"/><rect x="184.9" y="30.3" width="2.3" height="1.3" fill="#8f8f90"/><rect x="183.2" y="27.4" width="2.4" height="1.5" fill="#f6f6f6"/><rect x="184.2" y="36.7" width="2.7" height="1.5" fill="#8f8f90"/><rect x="137.0" y="42.3" width="2.5" height="1.1" fill="#eeeeee"/><rect x="201.1" y="47.7" width="2.1" height="1.6" fill="#f6f6f6"/><rect x="185.5" y="37.0" width="1.3" height="2.7" fill="#8f8f90"/><rect x="149.0" y="64.6" width="3.9" height="3.3" fill="#374d2a"/><rect x="146.0" y="68.4" width="3.0" height="2.8" fill="#202d16"/><rect x="165.7" y="67.4" width="2.0" height="2.5" fill="#202d16"/><rect x="156.3" y="76.2" width="2.7" height="3.2" fill="#374d2a"/><rect x="156.9" y="73.4" width="4.4" height="2.8" fill="#1a2611"/><rect x="147.6" y="51.4" width="2.5" height="4.8" fill="#1a2611"/><rect x="146.5" y="46.9" width="4.7" height="5.0" fill="#2f4024"/><rect x="146.0" y="71.8" width="4.4" height="4.1" fill="#374d2a"/><rect x="148.4" y="45.0" width="3.7" height="4.4" fill="#2f4024"/><rect x="163.0" y="67.3" width="4.9" height="2.9" fill="#1a2611"/><rect x="159.4" y="58.3" width="2.6" height="2.8" fill="#1a2611"/><rect x="139.9" y="70.2" width="4.3" height="2.7" fill="#202d16"/><rect x="152.7" y="62.6" width="2.6" height="2.6" fill="#2f4024"/><rect x="156.1" y="54.6" width="4.3" height="4.6" fill="#2f4024"/><rect x="138.5" y="76.9" width="3.1" height="2.3" fill="#374d2a"/><rect x="156.7" y="54.1" width="3.6" height="2.1" fill="#1a2611"/><rect x="143.8" y="72.5" width="3.7" height="3.8" fill="#2f4024"/><rect x="145.6" y="69.3" width="3.3" height="4.8" fill="#2f4024"/><rect x="143.6" y="48.3" width="2.3" height="2.2" fill="#202d16"/><rect x="168.3" y="73.8" width="2.2" height="3.8" fill="#374d2a"/><rect x="140.0" y="53.2" width="2.7" height="2.3" fill="#374d2a"/><rect x="143.0" y="71.7" width="3.1" height="2.7" fill="#2f4024"/><rect x="142.7" y="75.0" width="4.8" height="2.2" fill="#1a2611"/><rect x="163.0" y="66.8" width="3.9" height="5.0" fill="#1a2611"/><rect x="140.3" y="53.1" width="2.0" height="2.6" fill="#202d16"/></g></g>
</svg>
<div class="abs" style="left:0;top:97.500px;width:203px;height:1.500px;background:#4f78c4"></div>
</div>

<!-- connector -->
<div class="abs" style="left:83px;top:784px;width:4px;height:10px;background:#2f9a5b"></div>

<!-- audio clip -->
<div class="abs" id="aud" style="left:42px;top:793px;width:346px;height:75px;border-radius:3px;overflow:hidden;background:#2e9658">
<svg class="abs" style="left:0;top:0" width="346" height="75" viewBox="0 0 346 75">
<path d="M15 75 V46.6 H16 V31.2 H17 V30.7 H18 V30.0 H19 V30.6 H20 V31.5 H21 V31.7 H22 V34.9 H23 V36.4 H24 V36.2 H25 V39.4 H26 V39.2 H27 V75 Z M34 75 V42.3 H35 V31.1 H36 V30.1 H37 V30.6 H38 V30.0 H39 V33.2 H40 V37.9 H41 V37.7 H42 V34.4 H43 V33.9 H44 V31.5 H45 V33.7 H46 V37.3 H47 V35.3 H48 V33.9 H49 V30.4 H50 V33.2 H51 V40.6 H52 V41.5 H53 V43.1 H54 V41.0 H55 V39.7 H56 V39.9 H57 V37.1 H58 V38.7 H59 V36.6 H60 V30.7 H61 V30.5 H62 V32.1 H63 V30.7 H64 V30.0 H65 V30.0 H66 V32.0 H67 V30.0 H68 V32.4 H69 V33.2 H70 V32.7 H71 V33.8 H72 V33.3 H73 V33.5 H74 V33.6 H75 V35.2 H76 V34.6 H77 V31.4 H78 V31.1 H79 V31.8 H80 V32.9 H81 V32.4 H82 V34.2 H83 V36.6 H84 V35.7 H85 V32.7 H86 V32.1 H87 V32.7 H88 V34.7 H89 V35.3 H90 V36.9 H91 V37.7 H92 V34.4 H93 V34.4 H94 V34.0 H95 V35.2 H96 V34.1 H97 V35.2 H98 V36.6 H99 V38.6 H100 V37.5 H101 V35.5 H102 V32.5 H103 V32.4 H104 V32.0 H105 V32.9 H106 V35.6 H107 V36.0 H108 V38.1 H109 V40.7 H110 V40.5 H111 V41.2 H112 V36.8 H113 V34.8 H114 V32.8 H115 V32.1 H116 V30.0 H117 V31.3 H118 V32.0 H119 V30.2 H120 V30.6 H121 V30.5 H122 V30.6 H123 V30.0 H124 V31.6 H125 V33.5 H126 V34.4 H127 V32.8 H128 V32.4 H129 V30.9 H130 V32.8 H131 V37.3 H132 V38.1 H133 V39.3 H134 V39.7 H135 V40.6 H136 V38.9 H137 V36.9 H138 V34.8 H139 V35.7 H140 V37.3 H141 V35.5 H142 V36.7 H143 V33.1 H144 V30.9 H145 V31.9 H146 V31.8 H147 V36.5 H148 V38.1 H149 V44.1 H150 V34.0 H151 V31.2 H152 V32.6 H153 V32.8 H154 V38.1 H155 V37.0 H156 V36.0 H157 V36.4 H158 V36.7 H159 V36.9 H160 V37.0 H161 V35.5 H162 V35.0 H163 V34.5 H164 V34.6 H165 V35.8 H166 V32.8 H167 V31.0 H168 V30.7 H169 V32.6 H170 V34.9 H171 V37.0 H172 V37.0 H173 V35.8 H174 V36.7 H175 V38.2 H176 V38.0 H177 V36.8 H178 V37.8 H179 V33.9 H180 V35.0 H181 V33.8 H182 V36.1 H183 V36.8 H184 V33.6 H185 V33.6 H186 V33.8 H187 V35.8 H188 V34.7 H189 V34.3 H190 V31.9 H191 V31.5 H192 V32.6 H193 V33.5 H194 V32.2 H195 V33.5 H196 V33.9 H197 V36.9 H198 V42.1 H199 V45.6 H200 V44.0 H201 V41.7 H202 V37.9 H203 V32.7 H204 V32.4 H205 V32.1 H206 V30.7 H207 V31.8 H208 V32.3 H209 V32.2 H210 V32.2 H211 V31.2 H212 V31.6 H213 V31.5 H214 V30.6 H215 V33.9 H216 V31.8 H217 V32.0 H218 V31.2 H219 V30.0 H220 V31.4 H221 V32.2 H222 V34.0 H223 V36.4 H224 V36.5 H225 V37.1 H226 V40.6 H227 V41.8 H228 V42.0 H229 V43.3 H230 V44.5 H231 V46.8 H232 V47.1 H233 V48.9 H234 V47.0 H235 V45.4 H236 V46.6 H237 V45.7 H238 V42.2 H239 V41.6 H240 V37.8 H241 V39.0 H242 V39.4 H243 V41.2 H244 V37.7 H245 V37.1 H246 V34.9 H247 V34.3 H248 V34.2 H249 V33.6 H250 V32.6 H251 V31.5 H252 V31.7 H253 V31.0 H254 V31.4 H255 V34.7 H256 V35.7 H257 V40.4 H258 V42.0 H259 V44.6 H260 V47.8 H261 V50.3 H262 V33.0 H263 V30.0 H264 V33.3 H265 V34.1 H266 V32.8 H267 V36.3 H268 V38.9 H269 V41.0 H270 V40.5 H271 V42.0 H272 V43.2 H273 V41.1 H274 V41.7 H275 V40.2 H276 V35.9 H277 V33.5 H278 V32.7 H279 V31.8 H280 V36.0 H281 V37.6 H282 V41.1 H283 V43.6 H284 V43.3 H285 V44.9 H286 V48.1 H287 V44.8 H288 V41.6 H289 V37.6 H290 V34.4 H291 V30.7 H292 V31.0 H293 V32.9 H294 V33.0 H295 V30.6 H296 V30.1 H297 V31.7 H298 V33.4 H299 V34.1 H300 V32.2 H301 V32.6 H302 V33.5 H303 V37.1 H304 V39.2 H305 V43.8 H306 V42.9 H307 V44.5 H308 V47.7 H309 V44.0 H310 V40.1 H311 V39.4 H312 V39.7 H313 V41.7 H314 V42.2 H315 V42.7 H316 V46.6 H317 V46.0 H318 V44.8 H319 V43.4 H320 V41.1 H321 V38.5 H322 V34.6 H323 V36.3 H324 V33.7 H325 V32.4 H326 V32.0 H327 V30.6 H328 V30.9 H329 V30.7 H330 V32.0 H331 V34.4 H332 V35.5 H333 V35.0 H334 V36.6 H335 V38.2 H336 V40.8 H337 V41.3 H338 V42.8 H339 V44.2 H340 V44.1 H341 V42.1 H342 V39.5 H343 V39.7 H344 V38.2 H345 V37.3 H346 V75 Z" fill="#38b26c"/>
<path d="M312.400 17.300 L346 17.300 L346 65 C343.500 54 339 42 332 31.500 C326 23 320 19 312.400 17.300 Z" fill="#0a3a1c" fill-opacity="0.3"/>
<path d="M312.400 17.300 C320 19 326 23 332 31.500 C339 42 343.500 54 346 65" fill="none" stroke="#125a30" stroke-width="1.100"/>
<rect x="0" y="29" width="346" height="1" fill="#52c283"/>
<g fill="#e8d43a"><rect x="16.9" y="27.5" width="3" height="2"/><rect x="34.9" y="27.5" width="2.3" height="2"/><rect x="44.2" y="25.5" width="0.8" height="4"/><rect x="49.0" y="25.5" width="0.8" height="4"/><rect x="61.8" y="26.5" width="2.4" height="3"/><rect x="66.3" y="25.5" width="1" height="4"/><rect x="67.3" y="27.5" width="1.7" height="2"/><rect x="73.0" y="28.0" width="0.8" height="1.5"/><rect x="80.8" y="23.5" width="0.9" height="6"/><rect x="81.7" y="28.0" width="1" height="1.5"/><rect x="86.0" y="28.0" width="0.8" height="1.5"/><rect x="101.4" y="28.0" width="0.8" height="1.5"/><rect x="106.4" y="28.0" width="0.8" height="1.5"/><rect x="117.6" y="26.5" width="4.4" height="3"/><rect x="123.5" y="27.0" width="1" height="2.5"/><rect x="128.5" y="27.0" width="1.5" height="2.5"/><rect x="145.3" y="27.0" width="0.8" height="2.5"/><rect x="150.7" y="25.0" width="0.9" height="4.5"/><rect x="167.0" y="27.5" width="0.8" height="2"/><rect x="173.0" y="25.0" width="0.9" height="4.5"/><rect x="189.0" y="25.0" width="0.9" height="4.5"/><rect x="189.9" y="28.0" width="1" height="1.5"/><rect x="263.2" y="26.5" width="0.9" height="3"/><rect x="293.3" y="28.0" width="2" height="1.5"/><rect x="296.6" y="25.5" width="0.9" height="4"/><rect x="297.5" y="28.0" width="1" height="1.5"/><rect x="330.0" y="28.0" width="0.8" height="1.5"/></g>
<circle cx="265.500" cy="35.200" r="3.400" fill="#9fd9b6" fill-opacity="0.55"/>
</svg>
<div class="t" id="audt" style="left:3px;top:1.500px;font-size:11px;letter-spacing:0.2px;color:#e4f3ea">Rio (Rio Bossa Nova) - Ricardo Leão</div>
</div>
<div class="abs" style="left:307px;top:793px;width:1px;height:75px;background:#70cc9b"></div>

<!-- music well -->
<div class="abs" style="left:41px;top:877px;width:970px;height:30px;border:1px dashed #2a2a2a;border-radius:4px"></div>
<svg class="abs" style="left:53px;top:881px" width="14" height="15" viewBox="0 0 14 15"><path d="M4.200 2.600 L12.600 0.800 L12.600 10.200 A2.300 1.800 -20 1 1 11.400 8.600 L11.400 3.600 L5.400 4.900 L5.400 12 A2.300 1.800 -20 1 1 4.200 10.400 Z" fill="#1d1d1d"/></svg>
</body>
</html>
